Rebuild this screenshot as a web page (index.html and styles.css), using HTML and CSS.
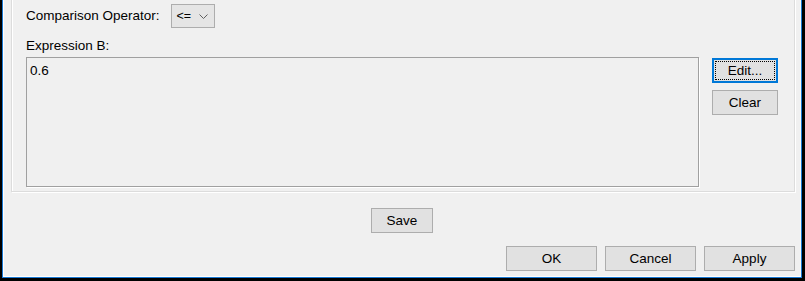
FILE: index.html
```html
<!DOCTYPE html>
<html>
<head>
<meta charset="utf-8">
<link rel="stylesheet" href="styles.css">
</head>
<body>
<div class="window">
  <div class="frame">
    <div class="content">
      <div class="group">
        <div class="op-row">
          <span class="label">Comparison Operator:</span>
          <div class="combo">
            <span class="combo-text">&lt;=</span>
            <svg class="chev" width="9" height="6" viewBox="0 0 9 6"><path d="M0.5 0.5 L4.5 4.5 L8.5 0.5" fill="none" stroke="#606060" stroke-width="1"/></svg>
          </div>
        </div>
        <div class="expr-label label">Expression B:</div>
        <div class="expr-row">
          <div class="textbox">0.6</div>
          <div class="side-buttons">
            <button class="btn btn-focus">Edit...</button>
            <button class="btn">Clear</button>
          </div>
        </div>
      </div>
      <div class="save-row">
        <button class="btn btn-save">Save</button>
      </div>
      <div class="dialog-row">
        <button class="btn btn-dialog">OK</button>
        <button class="btn btn-dialog">Cancel</button>
        <button class="btn btn-dialog">Apply</button>
      </div>
    </div>
  </div>
</div>
</body>
</html>
```

FILE: styles.css
```css
html, body {
  margin: 0;
  padding: 0;
  background: #000;
}
body {
  font-family: "Liberation Sans", Arial, sans-serif;
  font-size: 13px;
  color: #000;
  overflow: hidden;
}
.window {
  width: 805px;
  height: 281px;
  box-sizing: border-box;
  border-style: solid;
  border-color: #000;
  border-width: 0 3px 3px 2px;
  background: #000;
  overflow: hidden;
}
.frame {
  height: 100%;
  box-sizing: border-box;
  border: 1px solid #1a7ad4;
  border-top: none;
}
.content {
  height: 100%;
  box-sizing: border-box;
  background: #f0f0f0;
  border-left: 1px solid #ffffff;
  border-bottom: 1px solid #ffffff;
  border-right: 1px solid #f8f8f8;
  display: flex;
  flex-direction: column;
}
.group {
  margin: -10px 5px 0 7px;
  height: 202px;
  box-sizing: border-box;
  border: 1px solid #dcdcdc;
  box-shadow: inset 1px 1px 0 #ffffff, 1px 1px 0 #ffffff;
  padding: 13px 15px 0 14px;
  display: flex;
  flex-direction: column;
}
.op-row {
  display: flex;
  align-items: center;
  height: 24px;
}
.label {
  font-size: 13.5px;
  line-height: 16px;
}
.combo {
  margin-left: 11px;
  width: 44px;
  height: 24px;
  box-sizing: border-box;
  border: 1px solid #adadad;
  background: #e5e5e5;
  display: flex;
  align-items: center;
  padding-left: 5px;
}
.combo-text {
  font-size: 12.5px;
  width: 22px;
}
.chev {
  margin-top: 1px;
}
.expr-label {
  margin-top: 10px;
}
.expr-row {
  display: flex;
  margin-top: 3px;
  gap: 13px;
}
.textbox {
  width: 673px;
  height: 130px;
  box-sizing: border-box;
  border: 1px solid #a0a0a0;
  box-shadow: 1px 1px 0 #ffffff;
  background: #f0f0f0;
  padding: 5px 3px;
  font-size: 13.5px;
  line-height: 16px;
}
.side-buttons {
  display: flex;
  flex-direction: column;
  gap: 7px;
  padding-top: 1px;
}
.btn {
  font-family: "Liberation Sans", Arial, sans-serif;
  font-size: 13.5px;
  color: #000;
  background: #e1e1e1;
  border: 1px solid #adadad;
  border-radius: 0;
  width: 66px;
  height: 25px;
  padding: 0;
  margin: 0;
  box-sizing: border-box;
  line-height: 16px;
}
.btn-focus {
  border-color: #0078d7;
  box-shadow: inset 0 0 0 1px #0078d7;
  outline: 1px dotted #000;
  outline-offset: -4px;
}
.save-row {
  display: flex;
  justify-content: center;
  margin-top: 16px;
}
.btn-save {
  width: 62px;
}
.dialog-row {
  display: flex;
  justify-content: flex-end;
  gap: 8px;
  margin-top: 13px;
  padding-right: 5px;
}
.btn-dialog {
  width: 91px;
}
```
